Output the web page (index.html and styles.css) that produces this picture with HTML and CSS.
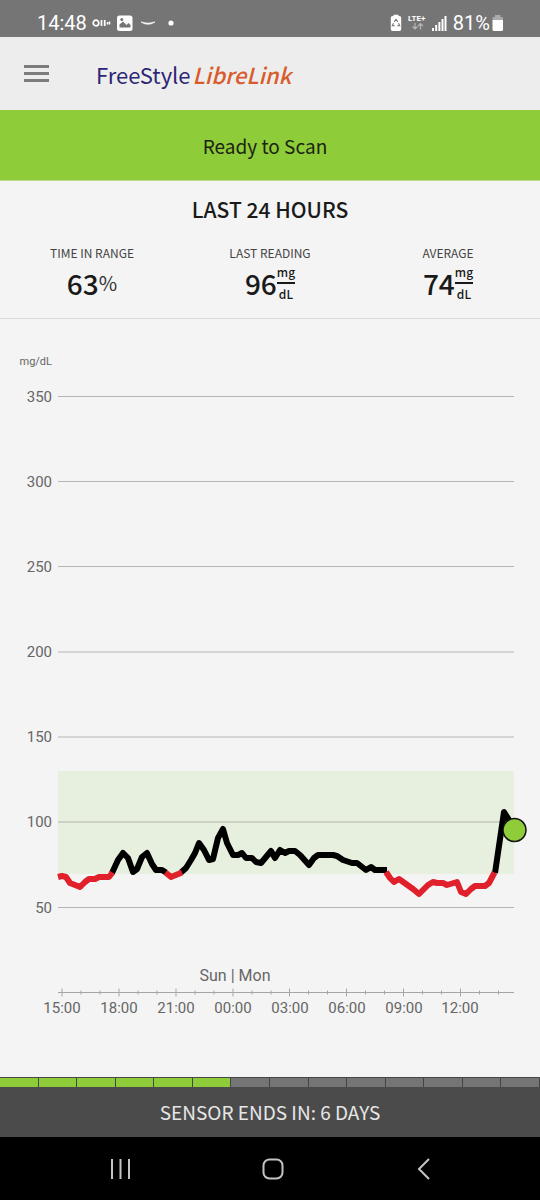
FILE: index.html
```html
<!DOCTYPE html>
<html lang="en">
<head>
<meta charset="utf-8">
<meta name="viewport" content="width=device-width, initial-scale=1">
<title>FreeStyle LibreLink</title>
<link rel="stylesheet" href="styles.css">
</head>
<body>
<div class="app">
  <div class="status">
    <div class="status-group">
      <span>14:48</span>
      <svg class="status-left-icons" width="84" height="18" viewBox="0 0 84 18" aria-hidden="true">
        <g fill="none" stroke="#fff">
          <circle cx="4" cy="9" r="2.8" stroke-width="1.7"/>
          <path d="M9.5 6v6M12.700 6v6" stroke-width="1.7"/>
          <path d="M15.500 8v2.500M17.500 7.500v3" stroke-width="1.500"/>
        </g>
        <rect x="25" y="1.500" width="15.500" height="15.500" rx="2.500" fill="#fff"/>
        <path d="M27.500 13.500v-3l3.500-3 3.500 3.500 2-2 2 2v2.500z" fill="#757575"/>
        <circle cx="29.800" cy="5.500" r="1.500" fill="#757575"/>
        <path d="M49 8q7 4.500 14 0q-7 2.500-14 0z" fill="#fff" stroke="#fff" stroke-width=".7"/>
        <circle cx="79" cy="9" r="2.600" fill="#fff"/>
      </svg>
    </div>
    <div class="status-group">
      <svg width="58" height="18" viewBox="0 0 58 18" aria-hidden="true">
        <path d="M3.500 2V.7h5V2h1q1.700 0 1.700 1.700v11.600q0 1.700-1.700 1.700h-7Q.8 17 .8 15.300V3.700Q.8 2 2.500 2z" fill="#fff"/>
        <path d="M4.200 8 6 5.300 7.800 8M8.500 9.300l1.200 2.500H7.200M4.800 11.800H2.300L3.500 9.300" fill="none" stroke="#757575" stroke-width="1.100"/>
        <text class="lte" x="18" y="7">LTE+</text>
        <path d="M25 9v6m-2.500-2.500L25 15l2.500-2.500M30.500 15.500V9.500M28 12l2.500-2.500L33 12" fill="none" stroke="#b5b5b5" stroke-width="1.200"/>
        <path d="M43 17v-3M46.200 17v-6M49.400 17V8M52.500 17V5M55.500 17V2" stroke="#fff" stroke-width="2"/>
      </svg>
      <span class="charge">81%</span>
      <svg class="battery" width="12" height="18" viewBox="0 0 12 18" aria-hidden="true">
        <path d="M3 3V1h5.500v2h1.300q1.200 0 1.200 1.200V6H.5V4.200Q.5 3 1.700 3z" fill="#aaa"/>
        <path d="M.5 6H11v9.500q0 1.500-1.500 1.500H2Q.5 17 .5 15.500z" fill="#fff"/>
      </svg>
    </div>
  </div>

  <header class="header">
    <button class="menu" type="button" aria-label="Menu"><i></i><i></i><i></i></button>
    <h1 class="logo"><span class="logo-free">FreeStyle</span><span class="logo-libre">LibreLink</span></h1>
  </header>

  <button class="scan" type="button">Ready to Scan</button>

  <section class="summary">
    <h2 class="summary-title">LAST 24 HOURS</h2>
    <div class="stats">
      <div class="stat">
        <div class="stat-label">TIME IN RANGE</div>
        <div class="stat-value">63<span class="percent">%</span></div>
      </div>
      <div class="stat">
        <div class="stat-label">LAST READING</div>
        <div class="stat-value">96<span class="unit"><span class="unit-top">mg</span><span>dL</span></span></div>
      </div>
      <div class="stat">
        <div class="stat-label">AVERAGE</div>
        <div class="stat-value">74<span class="unit"><span class="unit-top">mg</span><span>dL</span></span></div>
      </div>
    </div>
  </section>

  <main class="chart">
    <svg class="plot" viewBox="0 319 540 758" role="img" aria-label="Glucose over the last 24 hours">
      <rect class="target" x="58" y="771" width="456" height="103"/>
      <path class="grid" d="M58 396.500H514M58 481.500H514M58 566.500H514M58 652H514M58 737H514M58 822H514M58 907.500H514"/>
      <g class="scale">
        <text class="small" x="52" y="365">mg/dL</text>
        <text x="52" y="402">350</text>
        <text x="52" y="487">300</text>
        <text x="52" y="572">250</text>
        <text x="52" y="657">200</text>
        <text x="52" y="742">150</text>
        <text x="52" y="827">100</text>
        <text x="52" y="913">50</text>
      </g>
      <path class="axis" d="M58 992.500H514M62 988.500v8M119 988.500v8M176 988.500v8M233 988.500v8M289.500 988.500v8M346.500 988.500v8M403.500 988.500v8M460.500 988.500v8M81 990.500v4M100 990.500v4M138 990.500v4M157 990.500v4M195 990.500v4M214 990.500v4M252 990.500v4M271 990.500v4M308.500 990.500v4M327.500 990.500v4M365.500 990.500v4M384.500 990.500v4M422.500 990.500v4M441.500 990.500v4M479.500 990.500v4M498.500 990.500v4"/>
      <g class="hours">
        <text class="date" x="235" y="981">Sun | Mon</text>
        <text x="62" y="1013">15:00</text>
        <text x="119" y="1013">18:00</text>
        <text x="176" y="1013">21:00</text>
        <text x="233" y="1013">00:00</text>
        <text x="290" y="1013">03:00</text>
        <text x="347" y="1013">06:00</text>
        <text x="404" y="1013">09:00</text>
        <text x="460" y="1013">12:00</text>
      </g>
      <path class="trace" d="M112 873 118 860 123 853 128 858 133 872 137 869 142 857 147 853 152 864 156 870 162 870 166 872.500M181 872.500 186 868 191 860 195 853 199 843 204 850 209 860 213 859 218 838 223 829 227 843 233 855 238 855 242 853 246 858 252 858 256 862 261 863 266 857 271 851 275 858 280 850 285 853 289 851 295 851 300 855 309 865 314 858 318 855 333 855 337 856 343 860 352 863 357 863 366 870 371 867 375 870 387 870M495 873 504 812 514 828"/>
      <path class="trace low" d="M58 877 62 876 66 877 70 883 75 885 80 887 85 882 89 879 95 879 99 877 109 877 112.500 872.500M165.500 872.500 171 877 182 872.500M386 872 390 878 394 882 399 879 413 889 419 894 423 890 428 885 433 882 437 883 443 883 447 885 457 882 461 892 466 894 471 889 475 886 485 886 489 883 494.500 872.500"/>
      <circle class="now" cx="514.500" cy="830" r="11.500"/>
    </svg>
  </main>

  <div class="days" aria-hidden="true">
    <i class="left"></i><i class="left"></i><i class="left"></i><i class="left"></i><i class="left"></i><i class="left"></i><i></i><i></i><i></i><i></i><i></i><i></i><i></i><i></i>
  </div>
  <footer class="sensor">SENSOR ENDS IN: 6 DAYS</footer>

  <nav class="system">
    <button type="button" aria-label="Recent apps"><svg width="22" height="22" viewBox="0 0 22 22"><path d="M2 1v20M10.500 1v20M19 1v20"/></svg></button>
    <button type="button" aria-label="Home"><svg width="22" height="22" viewBox="0 0 22 22"><rect x="1.500" y="1.500" width="19" height="19" rx="6"/></svg></button>
    <button type="button" aria-label="Back"><svg width="22" height="22" viewBox="0 0 22 22"><path d="M16 1 6 11 16 21"/></svg></button>
  </nav>
</div>
</body>
</html>
```

FILE: styles.css
```css
* { box-sizing: border-box; }

body {
  margin: 0;
  background: #f4f4f4;
  color: #1a1a1a;
  font-family: "Noto Sans CJK SC", "Noto Sans", sans-serif;
}

button {
  border: 0;
  padding: 0;
  background: none;
  color: inherit;
  font: inherit;
}

.app {
  display: flex;
  flex-direction: column;
  min-height: 100vh;
}

.status {
  display: flex;
  justify-content: space-between;
  padding: 13px 36px 4px 37px;
  background: #757575;
  color: #fff;
  font: 20px/20px Roboto, sans-serif;
}

.status-group {
  display: flex;
  align-items: center;
}

.status-left-icons { margin-left: 5px; }
.charge { margin-left: 5px; }
.battery { margin-left: 2px; }

.lte {
  fill: #fff;
  font: bold 8px Roboto, sans-serif;
}

.header {
  display: flex;
  align-items: center;
  gap: 47px;
  height: 73px;
  padding: 0 24px;
  background: #ededed;
}

.menu {
  display: flex;
  flex-direction: column;
  gap: 4px;
  width: 25px;
}

.menu i {
  height: 3px;
  background: #7c7c7c;
}

.logo {
  display: flex;
  gap: 2px;
  margin: 0;
  font-weight: 400;
  font-size: 22px;
  line-height: 30px;
}

.logo-free { color: #2d2674; }

.logo-libre {
  color: #d95b2b;
  font-style: italic;
  font-weight: 500;
}

.scan {
  height: 71px;
  padding-right: 10px;
  background: #8fcc3a;
  color: #1b2411;
  font-size: 19px;
  border-bottom: 1px solid #c0dc92;
}

.summary {
  padding: 12px 3px 15px;
  border-bottom: 1px solid #d9d9d9;
}

.summary-title {
  margin: 0;
  font-size: 21px;
  font-weight: 500;
  line-height: 32px;
  text-align: center;
}

.stats {
  display: grid;
  grid-template-columns: repeat(3, 1fr);
  margin-top: 18px;
}

.stat { text-align: center; }

.stat-label {
  color: #444;
  font-size: 12px;
  line-height: 20px;
}

.stat-value {
  display: flex;
  align-items: center;
  justify-content: center;
  height: 40px;
  font-size: 28px;
  font-weight: 500;
  line-height: 40px;
}

.percent {
  color: #333;
  font-size: 20px;
  font-weight: 400;
}

.unit {
  display: flex;
  flex-direction: column;
  font-size: 12px;
  line-height: 20px;
}

.unit-top { border-bottom: 2px solid #1a1a1a; }

.chart { flex: 1; }

.plot {
  display: block;
  width: 100%;
}

.plot text {
  fill: #666;
  font: 15px Roboto, sans-serif;
}

.scale text { text-anchor: end; }
.plot .small { font-size: 11px; }
.hours text { text-anchor: middle; }
.plot .date { font-size: 16px; }
.target { fill: #e7f0df; }

.grid {
  fill: none;
  stroke: #777;
  stroke-opacity: .5;
}

.axis {
  fill: none;
  stroke: #a6a6a6;
}

.trace {
  fill: none;
  stroke: #000;
  stroke-width: 6;
  stroke-linejoin: round;
}

.low { stroke: #e0202b; }

.now {
  fill: #8fcc3a;
  stroke: #111;
  stroke-width: 1.5;
}

.days {
  display: grid;
  grid-template-columns: repeat(14, 1fr);
  gap: 1px;
  height: 10px;
  padding: 1px 1px 0 0;
  background: #454545;
}

.days i { background: #757575; }
.days .left { background: #8fcc3a; }

.sensor {
  background: #4b4b4b;
  color: #e6e6e6;
  font-size: 19px;
  line-height: 50px;
  text-align: center;
}

.system {
  display: flex;
  justify-content: space-between;
  align-items: center;
  height: 63px;
  padding: 0 105px 0 110px;
  background: #000;
}

.system svg {
  display: block;
  fill: none;
  stroke: #c4c4c4;
  stroke-width: 2;
}
```
